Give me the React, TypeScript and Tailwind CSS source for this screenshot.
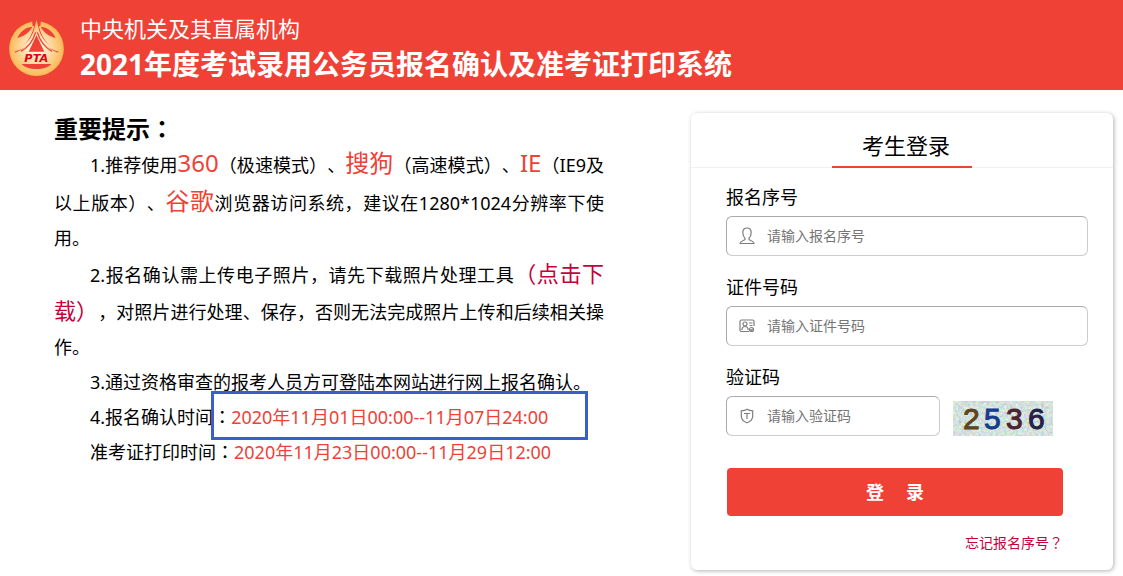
import { useState } from 'react';
import type { FormEvent, ReactNode } from 'react';

const UserIcon = () => (
  <svg viewBox="0 0 16 18" className="w-4 h-[18px]" fill="none" stroke="#7d7d7d" strokeWidth="1.2">
    <path d="M6 11.2C4.600 9.800 3.800 8 3.800 5.400C3.800 2.600 5.500 1 8 1s4.200 1.600 4.200 4.400c0 2.600-.8 4.400-2.200 5.800v1.300c0 .7 4.600 1.300 5 4H1c.4-2.700 5-3.300 5-4z" />
  </svg>
);

const IdCardIcon = () => (
  <svg viewBox="0 0 16 14" className="w-4 h-[14px]" fill="none" stroke="#7d7d7d" strokeWidth="1.2">
    <path d="M10 12.500H2.500a1.500 1.500 0 0 1-1.500-1.500V2.500A1.500 1.500 0 0 1 2.500 1h11A1.500 1.500 0 0 1 15 2.500V7" />
    <circle cx="6" cy="5" r="2" />
    <path d="M2.800 11C3 8.500 4.200 7.500 6 7.500s3 1 3.200 3.500M10 4h3.500M10.500 6.500h3" />
    <circle cx="12.500" cy="10.500" r="2" />
    <path d="M11.500 10.500l.8.800 1.300-1.500" />
  </svg>
);

const ShieldIcon = () => (
  <svg viewBox="0 0 14 16" className="w-[14px] h-4" fill="none" stroke="#7d7d7d" strokeWidth="1.2">
    <path d="M7 1.200c1.800 1.100 3.600 1.500 5.700 1.600v5.400c0 3.200-2.400 5.300-5.700 6.600-3.300-1.300-5.700-3.400-5.700-6.600V2.800C3.400 2.700 5.200 2.300 7 1.200z" />
    <path d="M4 5.500h6M7 5.500v5.500" />
  </svg>
);

const fields = [
  { id: 'regNo', label: '报名序号', placeholder: '请输入报名序号', icon: UserIcon },
  { id: 'idNo', label: '证件号码', placeholder: '请输入证件号码', icon: IdCardIcon },
  { id: 'captcha', label: '验证码', placeholder: '请输入验证码', icon: ShieldIcon },
];

function Logo() {
  return (
    <svg viewBox="0 0 165 168" className="w-[55px] h-14 shrink-0">
      <defs>
        <radialGradient id="gold" gradientUnits="userSpaceOnUse" cx="82" cy="86" r="84">
          <stop offset="0.2" stopColor="#fff3dc" />
          <stop offset="1" stopColor="#fcb650" />
        </radialGradient>
      </defs>
      <circle cx="82.500" cy="86" r="82" fill="url(#gold)" />
      <path d="M69 0H96L94 18H71z" fill="#ef4136" />
      <path d="M25 54C34 34 49 22 70 20C62 36 46 49 25 54z" fill="#ef4136" />
      <path d="M140 54C131 34 116 22 95 20C103 36 119 49 140 54z" fill="#ef4136" />
      {/* tower: red outline, then the pale legs over it */}
      <path d="M82.500 2C76 44 58 80 17 95M82.500 2C89 44 107 80 148 95" fill="none" stroke="#ef4136" strokeWidth="7" />
      <path d="M82.500 0L88 22C95 55 114 76 149 89V95C112 86 92 62 82.500 36C73 62 53 86 16 95V89C51 76 70 55 77 22z" fill="url(#gold)" />
      <path d="M80 37C72 63 58 82 36 94M85 37C93 63 107 82 129 94" fill="none" stroke="#ef4136" strokeWidth="4" />
      <path d="M82.500 46L59 95H106z" fill="#ef4136" />
      <path d="M38 132H127C118 142 103 147 82.500 147S47 142 38 132z" fill="#ef4136" />
      <text x="82" y="126" textAnchor="middle" fontSize="34" fontWeight="900" fontStyle="italic" fill="#e60012" fontFamily="'DejaVu Sans', sans-serif">PTA</text>
    </svg>
  );
}

function CaptchaImage() {
  return (
    <svg viewBox="0 0 100 35" className="mt-1 w-[100px] h-[35px]" role="img" aria-label="验证码图片">
      <defs>
        <filter id="noise" x="0" y="0" width="100%" height="100%">
          <feTurbulence type="fractalNoise" baseFrequency="0.35" numOctaves="3" seed="8" />
          <feColorMatrix values="1 0 0 0 0.2  0 0.9 0 0 0.34  0 0 1 0 0.26  0 0 0 0 1" />
        </filter>
      </defs>
      <rect width="100" height="35" fill="#c3d6cf" />
      <rect width="100" height="35" filter="url(#noise)" opacity="0.75" />
      <g fontFamily="'Liberation Sans', sans-serif" fontSize="30" strokeWidth="1">
        <text x="10" y="28" fill="#60431f" stroke="#60431f">2</text>
        <text x="31" y="28" fill="#173b8f" stroke="#173b8f">5</text>
        <text x="53" y="28" fill="#4b2334" stroke="#4b2334">3</text>
        <text x="75" y="28" fill="#252047" stroke="#252047">6</text>
      </g>
    </svg>
  );
}

// the JP face sets the colon and question mark in the middle of their cell
const Mid = ({ children }: { children: ReactNode }) => (
  <span className="font-['Noto_Sans_CJK_JP',sans-serif] leading-none" lang="ja">{children}</span>
);

const Hot = ({ children }: { children: ReactNode }) => (
  <span className="text-2xl leading-[35px] text-[#ef4136]">{children}</span>
);

export default function App() {
  const [values, setValues] = useState<Record<string, string>>({ regNo: '', idNo: '', captcha: '' });

  const handleSubmit = (e: FormEvent) => {
    e.preventDefault();
  };

  return (
    <div lang="zh-CN" className="min-h-screen bg-white text-black font-['Noto_Sans','Noto_Sans_CJK_SC',sans-serif] [text-spacing-trim:space-all]">
      <header className="h-[90px] bg-[#ef4136] text-white flex items-center pl-[9px] pt-1.5 gap-4">
        <Logo />
        <div>
          <p className="text-[22px] leading-8">中央机关及其直属机构</p>
          <h1 className="text-[28px] leading-10 font-bold">2021年度考试录用公务员报名确认及准考证打印系统</h1>
        </div>
      </header>

      <main className="flex justify-between items-start pl-[54px] pr-[10px] pt-[23px] pb-1">
        <section className="w-[52%] max-w-[550px] text-lg leading-[35px] text-justify">
          <h2 className="text-2xl leading-8 font-bold">重要提示<Mid>：</Mid></h2>
          <p className="indent-9">
            1.推荐使用<Hot>360</Hot>（极速模式）、<Hot>搜狗</Hot>（高速模式）、<Hot>IE</Hot>（IE9及以上版本）、<Hot>谷歌</Hot>浏览器访问系统，建议在1280*1024分辨率下使用。
          </p>
          <p className="indent-9">
            2.报名确认需上传电子照片，请先下载照片处理工具<a href="#download" className="text-[22px] leading-[35px] text-[#c7003c]">（点击下载）</a>，对照片进行处理、保存，否则无法完成照片上传和后续相关操作。
          </p>
          <p className="indent-9">3.通过资格审查的报考人员方可登陆本网站进行网上报名确认。</p>
          <p className="pl-9 text-left">
            4.报名确认时间
            <span className="relative">
              <Mid>：</Mid><span className="text-[#ef4136]">2020年11月01日00:00--11月07日24:00</span>
              <span className="absolute -left-0.5 -right-10 -top-3.5 h-[49px] border-3 border-[#3a5fcd]" />
            </span>
          </p>
          <p className="pl-9 text-left">
            准考证打印时间<Mid>：</Mid><span className="text-[#ef4136]">2020年11月23日00:00--11月29日12:00</span>
          </p>
        </section>

        <form onSubmit={handleSubmit} className="w-[422px] shrink-0 rounded-md bg-white pb-[17px] shadow-[1px_1px_4px_rgba(0,0,0,0.3)]">
          <div className="flex justify-center border-b border-[#f2f2f2]">
            <h2 className="w-[140px] -mb-px pt-3 pb-px pl-2 text-[22px] leading-10 text-center border-b-2 border-[#ef4136]">考生登录</h2>
          </div>

          <div className="pl-[35px] pr-[25px] pt-3">
            {fields.map(({ id, label, placeholder, icon: Icon }) => (
              <div key={id} className="mb-[14px]">
                <label htmlFor={id} className="block mb-0.5 text-lg leading-[34px]">{label}</label>
                <div className="flex items-center gap-[13px]">
                  <div className={`relative ${id === 'captcha' ? 'w-[214px]' : 'w-full'}`}>
                    <span className="absolute left-3 top-0 h-10 w-[18px] flex items-center justify-center"><Icon /></span>
                    <input
                      id={id}
                      type="text"
                      value={values[id]}
                      onChange={e => setValues(prev => ({ ...prev, [id]: e.target.value }))}
                      placeholder={placeholder}
                      className="w-full h-10 pl-10 pr-3 pb-0.5 text-sm rounded-md border border-t-[#aaa] border-l-[#aaa] border-r-[#ccc] border-b-[#ccc] placeholder:text-[#757575] outline-none"
                    />
                  </div>
                  {id === 'captcha' && <CaptchaImage />}
                </div>
              </div>
            ))}

            <div className="pl-px pr-[25px]">
              <button type="submit" className="mt-8 w-full h-12 rounded bg-[#ef4136] text-white text-lg font-bold flex items-center justify-center gap-[22px]">
                <span>登</span>
                <span>录</span>
              </button>
              <p className="mt-[17px] text-right text-sm leading-5">
                <a href="#forgot" className="text-[#c7003c]">忘记报名序号<Mid>？</Mid></a>
              </p>
            </div>
          </div>
        </form>
      </main>
    </div>
  );
}
